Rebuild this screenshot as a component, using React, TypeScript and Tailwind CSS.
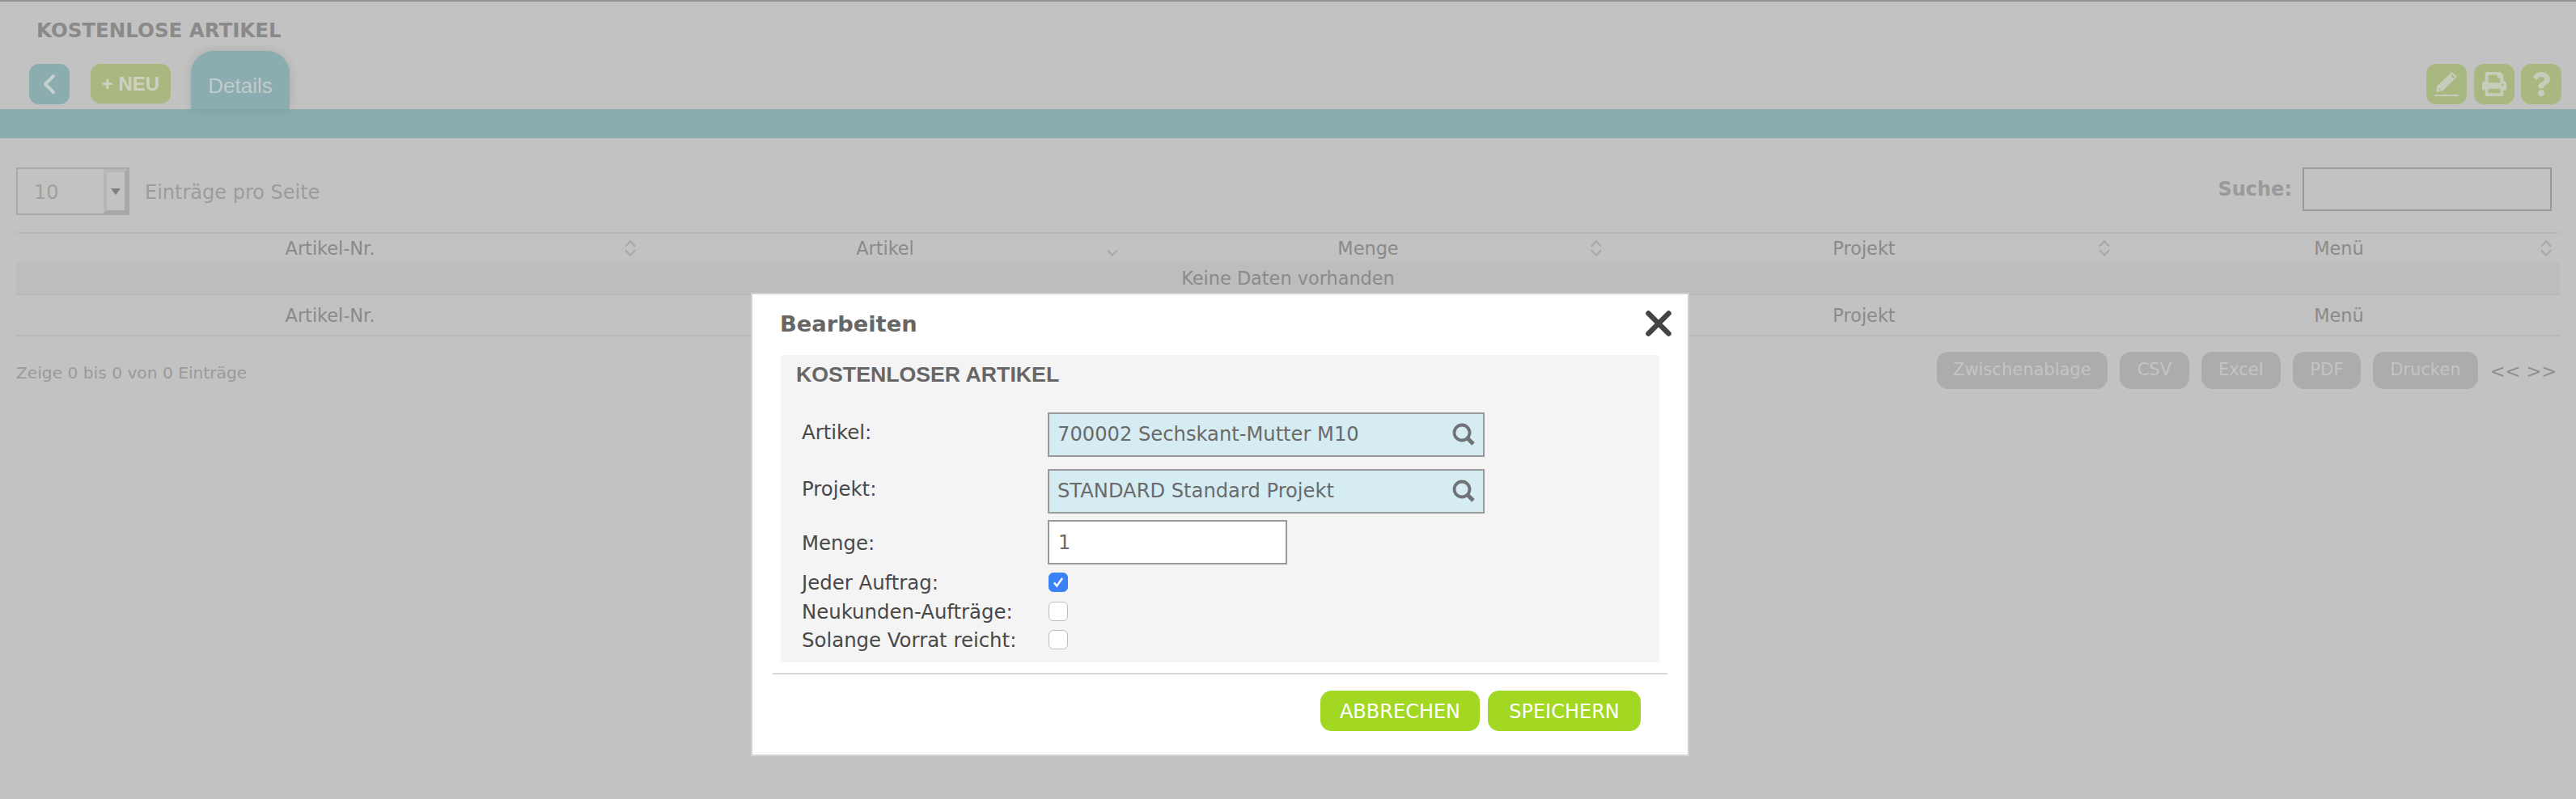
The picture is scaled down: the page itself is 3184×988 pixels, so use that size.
import { ChevronLeft } from 'lucide-react';
import { FaPrint, FaQuestion } from 'react-icons/fa';

const verdana = 'font-["DejaVu_Sans",Verdana,sans-serif]';

const columns = [
  { label: 'Artikel-Nr.', width: 'w-[776px]' },
  { label: 'Artikel', width: 'w-[596px]', sorted: true, underModal: true },
  { label: 'Menge', width: 'w-[598px]', underModal: true },
  { label: 'Projekt', width: 'w-[628px]' },
  { label: 'Menü', width: 'w-[546px]' },
];

const exportButtons = [
  { label: 'Zwischenablage', width: 'w-[211px]' },
  { label: 'CSV', width: 'w-[86px]' },
  { label: 'Excel', width: 'w-[98px]' },
  { label: 'PDF', width: 'w-[84px]' },
  { label: 'Drucken', width: 'w-[130px]' },
];

function SortIcon({ sorted }: { sorted?: boolean }) {
  return (
    <svg
      viewBox="0 0 16 20"
      className="absolute right-[9px] top-[8px] h-5 w-4"
      fill="none"
      stroke="#a6a6a6"
      strokeWidth="2"
    >
      {!sorted && <path d="M2 7.5 8 1.5l6 6" />}
      <path d="M2 12.5l6 6 6-6" />
    </svg>
  );
}

function SearchIcon() {
  return (
    <svg
      viewBox="0 0 28 28"
      className="absolute right-[10px] top-[11px] h-7 w-7"
      fill="none"
      stroke="#6f7375"
    >
      <circle cx="12" cy="12" r="9.5" strokeWidth="3.8" />
      <path d="M18.5 18.5 26 26" strokeWidth="5" />
    </svg>
  );
}

function LookupField({ value }: { value: string }) {
  return (
    <div
      className={`relative flex h-[55px] w-[540px] items-center border-2 border-[#999] bg-[#d5ecf2] pl-[10px] text-[24.2px] text-[#6a6a6a] ${verdana}`}
    >
      {value}
      <SearchIcon />
    </div>
  );
}

function CheckRow({ label, checked }: { label: string; checked?: boolean }) {
  return (
    <div className="flex h-[35.5px] items-start">
      <span className="w-[331px] pl-[26px] text-[24.4px] leading-[26px] text-[#484848]">{label}</span>
      <span
        className={`flex h-6 w-6 items-center justify-center rounded-[6px] border ${
          checked ? 'border-[#3b82f6] bg-[#3b82f6]' : 'border-[#bdbdbd] bg-white'
        }`}
      >
        {checked && (
          <svg viewBox="0 0 24 24" className="h-6 w-6" fill="none" stroke="white" strokeWidth="2.6">
            <path d="M6.5 12.5l3.6 4.5 7.4-10.5" />
          </svg>
        )}
      </span>
    </div>
  );
}

export default function App() {
  return (
    <div className={`relative h-[988px] w-[3184px] overflow-hidden bg-[#c2c2c2] ${verdana}`}>
      <div className="h-[2px] bg-[#929292]" />

      {/* Header */}
      <div className="h-[61px] pl-[45px] pt-[22px] text-[24.5px] font-bold leading-[28px] text-[#8a8a8a]">
        KOSTENLOSE ARTIKEL
      </div>
      <div className="flex h-[72px] items-start pl-9 pr-[18px]">
        <button className="mt-4 flex h-[50px] w-[50px] items-center justify-center rounded-xl bg-[#8badb0]">
          <ChevronLeft className="h-10 w-10 text-[#c4cfd0]" strokeWidth={2.4} />
        </button>
        <button className='ml-[26px] mt-4 h-[49px] w-[99px] rounded-xl bg-[#a9b881] font-["Liberation_Sans",Arial,sans-serif] text-[24px] font-bold text-[#cdd1c4]'>
          + NEU
        </button>
        <div className='ml-[25px] flex h-[72px] w-[122px] items-center justify-center rounded-t-[28px] bg-[#8badb0] pt-[14px] font-["Liberation_Sans",Arial,sans-serif] text-[26px] text-[#c0cccc] shadow-[0_0_12px_rgba(0,0,0,0.12)]'>
          Details
        </div>
        <div className="ml-auto mt-4 flex gap-[8.5px]">
          <span className="flex h-[50px] w-[50px] items-center justify-center rounded-xl bg-[#a9b881]">
            <svg viewBox="0 0 32 32" className="h-8 w-8" fill="#c7cdbb">
              <path d="M22.5 1 29 6.5 11.5 24 3 26l1.5-8zM23 4l-1.8 1.8 3.3 3L26.2 7zM7 20.5l-.8 2.8 2.8-.7z" fillRule="evenodd" />
              <rect x="1" y="29" width="30" height="2" rx="1" />
            </svg>
          </span>
          <span className="flex h-[50px] w-[50px] items-center justify-center rounded-xl bg-[#a9b881]">
            <FaPrint className="h-[30px] w-[30px] text-[#c7cdbb]" />
          </span>
          <span className="flex h-[50px] w-[50px] items-center justify-center rounded-xl bg-[#a9b881]">
            <FaQuestion className="h-[30px] w-[30px] text-[#c7cdbb]" />
          </span>
        </div>
      </div>
      <div className="h-9 bg-[#8badb0]" />

      {/* Table controls */}
      <div className="flex h-[116px] items-start justify-between px-5 pt-9">
        <div className="flex items-center">
          <div className="flex h-[59px] w-[140px] items-center border-2 border-[#a8a8a8] text-[24px] text-[#a0a0a0]">
            <span className="flex-1 pl-5 pt-[2px]">10</span>
            <span className="flex h-full w-[30px] items-center justify-center border-[4px] border-b-[#a8a8a8] border-l-[#b6b6b6] border-r-[#a8a8a8] border-t-[#b6b6b6]">
              <svg viewBox="0 0 12 8" className="h-2 w-3" fill="#7f7f7f">
                <path d="M0 0h12L6 8z" />
              </svg>
            </span>
          </div>
          <span className="ml-[19px] pt-[2px] text-[24px] text-[#9c9c9c]">Einträge pro Seite</span>
        </div>
        <div className="mr-[10px] flex items-center">
          <span className="mr-[13px] text-[24px] font-bold text-[#9a9a9a]">Suche:</span>
          <div className="h-[54px] w-[308px] border-2 border-[#9a9a9a]" />
        </div>
      </div>

      {/* Table */}
      <table className="ml-5 w-[3144px] table-fixed border-y-2 border-[#b8b8b8] text-[22.4px] text-[#8a8a8a]">
        <thead>
          <tr className="h-[37px]">
            {columns.map((col) => (
              <th key={col.label} className={`relative p-0 pt-[2px] font-normal ${col.width}`}>
                {col.label}
                <SortIcon sorted={col.sorted} />
              </th>
            ))}
          </tr>
        </thead>
        <tbody>
          <tr className="h-[39px] border-b-2 border-[#b8b8b8] bg-[#bdbdbd]">
            <td colSpan={5} className="p-0 pt-[2px] text-center">
              Keine Daten vorhanden
            </td>
          </tr>
        </tbody>
        <tfoot>
          <tr className="h-[51px]">
            {columns.map((col) => (
              <th key={col.label} className="p-0 pt-[2px] font-normal">
                {col.underModal ? '' : col.label}
              </th>
            ))}
          </tr>
        </tfoot>
      </table>

      {/* Table footer */}
      <div className="flex items-start justify-between pl-5 pr-6 pt-[19px]">
        <span className="pt-[11px] text-[20.2px] text-[#9a9a9a]">Zeige 0 bis 0 von 0 Einträge</span>
        <div className="flex items-center gap-[15px]">
          {exportButtons.map((btn) => (
            <button
              key={btn.label}
              className={`h-[46px] rounded-[14px] bg-[#acacac] text-[21px] text-[#c4c4c4] ${btn.width}`}
            >
              {btn.label}
            </button>
          ))}
          <span className="pt-[3px] text-[22.4px] text-[#8f8f8f]">&lt;&lt; &gt;&gt;</span>
        </div>
      </div>

      {/* Modal */}
      <div className="absolute left-[928px] top-[362px] h-[573px] w-[1160px] border-2 border-[#d2d2d2] bg-white">
        <div className="relative flex h-[75px] items-start pl-[34px] pt-[20px] text-[27.3px] font-bold leading-[34px] text-[#666]">
          Bearbeiten
          <svg
            viewBox="0 0 32 32"
            className="absolute right-[20px] top-[20px] h-8 w-8"
            stroke="#444"
            strokeWidth="6.5"
            strokeLinecap="round"
          >
            <path d="M3.5 3.5l25 25M28.5 3.5l-25 25" />
          </svg>
        </div>

        <div className="ml-[35px] h-[380px] w-[1086px] bg-[#f4f4f4]">
          <div className='h-[71px] pl-[19px] pt-[8px] font-["Liberation_Sans",Arial,sans-serif] text-[26.7px] font-bold leading-[32px] text-[#666]'>
            KOSTENLOSER ARTIKEL
          </div>
          <div className="flex h-[70px] items-start">
            <span className="w-[330px] pl-[26px] pt-[12px] text-[24.4px] leading-[26px] text-[#484848]">Artikel:</span>
            <LookupField value="700002 Sechskant-Mutter M10" />
          </div>
          <div className="flex h-[63px] items-start">
            <span className="w-[330px] pl-[26px] pt-[12px] text-[24.4px] leading-[26px] text-[#484848]">Projekt:</span>
            <LookupField value="STANDARD Standard Projekt" />
          </div>
          <div className="flex h-[65px] items-start">
            <span className="w-[330px] pl-[26px] pt-[16px] text-[24.4px] leading-[26px] text-[#484848]">Menge:</span>
            <div className="flex h-[55px] w-[296px] items-center border-2 border-[#999] bg-white pl-[11px] text-[24px] text-[#6a6a6a]">
              1
            </div>
          </div>
          <CheckRow label="Jeder Auftrag:" checked />
          <CheckRow label="Neukunden-Aufträge:" />
          <CheckRow label="Solange Vorrat reicht:" />
        </div>

        <div className="ml-[25px] mt-[13px] h-[2px] w-[1106px] bg-[#d8d8d8]" />

        <div className="mr-[58px] mt-5 flex justify-end gap-[10px]">
          <button className="h-[50px] w-[197px] rounded-[14px] bg-[#a2d822] pt-[2px] text-[24px] text-white">
            ABBRECHEN
          </button>
          <button className="h-[50px] w-[189px] rounded-[14px] bg-[#a2d822] pt-[2px] text-[24px] text-white">
            SPEICHERN
          </button>
        </div>
      </div>
    </div>
  );
}
